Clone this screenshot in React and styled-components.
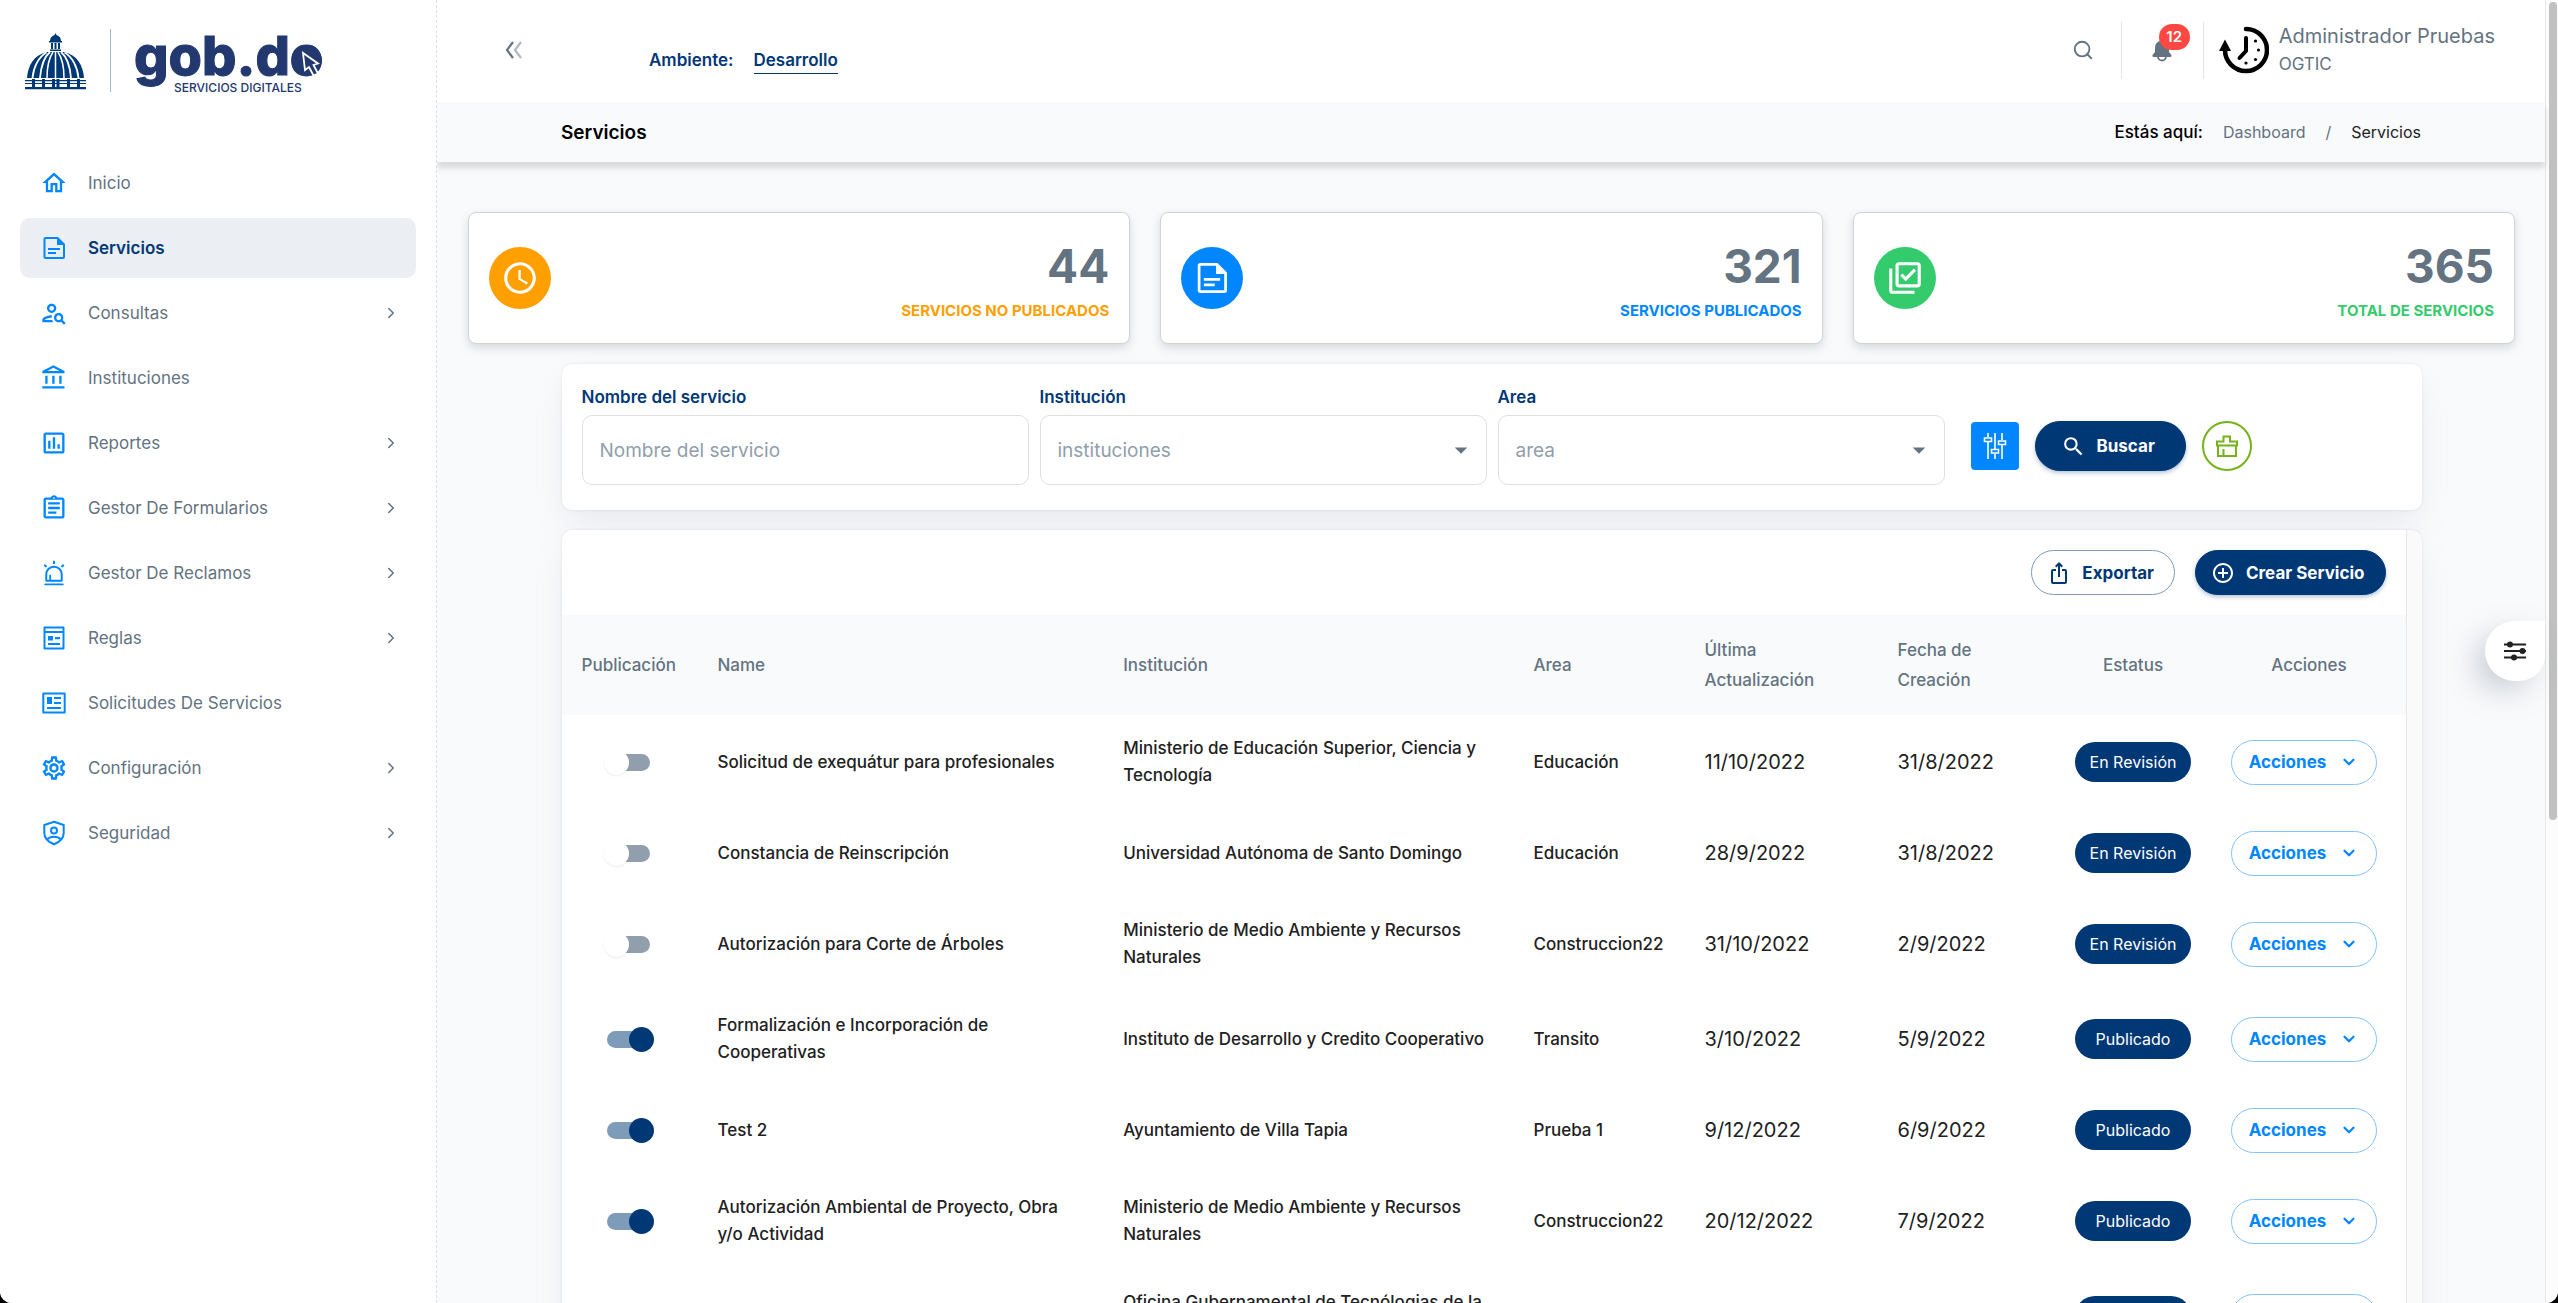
import React, { useState } from "react";
import styled, { createGlobalStyle } from "styled-components";
import {
  MdOutlineHome,
  MdOutlinePersonSearch,
  MdOutlineAccountBalance,
  MdOutlineInsertChart,
  MdOutlineAssignment,
  MdOutlineSettings,
  MdOutlineLibraryAddCheck,
  MdAccessTime,
  MdSearch,
  MdIosShare,
  MdAddCircleOutline,
  MdArrowDropDown,
} from "react-icons/md";
import { AiOutlineAlert } from "react-icons/ai";
import { FiSearch, FiChevronRight, FiChevronDown } from "react-icons/fi";

const colors = {
  primary: "#003876",
  blue: "#0087ff",
  orange: "#ffa000",
  green: "#34cb6c",
  lime: "#76b219",
  grey: "#637381",
  page: "#f9fafc",
};

const GlobalStyle = createGlobalStyle`
  * {
    box-sizing: border-box;
  }
  body {
    margin: 0;
    background: #000;
    font-family: Inter, "Liberation Sans", sans-serif;
    font-size: 17px;
    color: #212121;
  }
  button, input, select {
    font-family: inherit;
  }
  button {
    cursor: pointer;
  }
`;

// --- Layout ---
const Shell = styled.div`
  display: grid;
  grid-template-columns: 437px minmax(0, 1fr) 13px;
  height: 100vh;
  overflow: hidden;
  background: ${colors.page};
  border-radius: 0 0 12px 12px;
`;
const Sidebar = styled.aside`
  position: relative;
  z-index: 2;
  background: #fff;
  border-right: 1px dashed #dde1e6;
  padding: 29px 20px 20px;
`;
const LogoLink = styled.a`
  display: block;
  height: 64px;
  margin: 0 0 60px 5px;
`;
const Nav = styled.nav`
  display: flex;
  flex-direction: column;
  gap: 5px;
`;
const NavItem = styled.a`
  display: flex;
  align-items: center;
  height: 60px;
  padding: 0 16px 0 20px;
  border-radius: 10px;
  text-decoration: none;
  font-size: 17px;
  font-weight: ${(props) => (props.$active ? 600 : 400)};
  color: ${(props) => (props.$active ? colors.primary : colors.grey)};
  background: ${(props) => (props.$active ? "#ebeef3" : "transparent")};

  .nav-icon {
    width: 28px;
    height: 28px;
    margin-right: 20px;
    color: ${colors.blue};
  }
  .nav-arrow {
    margin-left: auto;
  }
`;
const Content = styled.div`
  position: relative;
  display: flex;
  flex-direction: column;
  min-width: 0;
  height: 100vh;
`;
const ScrollRail = styled.div`
  background: #fcfcfc;
  border-left: 1px solid #e8e8e8;
  padding: 2px 1px 2px 3px;
`;
const ScrollThumb = styled.div`
  height: 63%;
  border-radius: 4px;
  background: #c1c1c1;
`;

// --- Header ---
const Header = styled.header`
  display: flex;
  align-items: center;
  height: 102px;
  padding: 0 50px 2px 67px;
  background: #fff;
  flex-shrink: 0;
`;
const IconButton = styled.button`
  display: flex;
  align-items: center;
  justify-content: center;
  padding: 0;
  border: none;
  background: none;
  color: ${colors.grey};
`;
const Environment = styled.div`
  display: flex;
  gap: 20px;
  margin-left: 125px;
  padding-top: 20px;
  font-weight: 600;
  font-size: 17px;
  line-height: 26px;
  color: ${colors.primary};

  a {
    color: inherit;
    text-decoration: none;
    border-bottom: 1px solid ${colors.primary};
  }
`;
const HeaderRight = styled.div`
  display: flex;
  align-items: center;
  margin-left: auto;
`;
const Notifications = styled.div`
  margin: 0 15px 0 27px;
  border: solid #e3e6e9;
  border-width: 0 1px;
  padding: 3px 0 4px;
`;
const BellButton = styled(IconButton)`
  position: relative;
  width: 81px;
  height: 50px;
`;
const BellCount = styled.span`
  position: absolute;
  top: -1px;
  left: 37px;
  min-width: 31px;
  border-radius: 13px;
  background: #ff4842;
  color: #fff;
  font-size: 15px;
  font-weight: 600;
  line-height: 26px;
`;
const UserText = styled.div`
  margin-left: 10px;
  color: ${colors.grey};
`;
const UserName = styled.div`
  font-size: 20px;
  line-height: 28px;
`;
const UserOrg = styled.div`
  font-size: 17px;
  line-height: 28px;
`;
const SubHeader = styled.div`
  height: 60px;
  flex-shrink: 0;
  background: ${colors.page};
  box-shadow: 0 6px 6px rgba(0, 0, 0, 0.13);
  z-index: 1;
`;
const Container = styled.div`
  width: 100%;
  max-width: 1860px;
  margin: 0 auto;
`;
const SubHeaderInner = styled(Container)`
  display: flex;
  align-items: center;
  justify-content: space-between;
  height: 100%;
`;
const PageTitle = styled.h1`
  margin: 0;
  font-size: 19px;
  font-weight: 600;
  color: #000;
`;
const Breadcrumb = styled.nav`
  display: flex;
  align-items: center;
  gap: 20px;
  font-size: 16px;

  strong {
    font-size: 17px;
    font-weight: 500;
    color: #000;
  }
  a, i {
    color: ${colors.grey};
    text-decoration: none;
    font-style: normal;
  }
`;

// --- Stat cards ---
const Main = styled.main`
  flex: 1;
  min-height: 0;
  padding: 50px 30px 0 31px;
  overflow-y: auto;
  scrollbar-width: none;
`;
const Stats = styled.section`
  display: grid;
  grid-template-columns: repeat(3, 1fr);
  gap: 30px;
  margin-bottom: 20px;
`;
const StatCard = styled.article`
  display: flex;
  align-items: center;
  justify-content: space-between;
  height: 132px;
  padding: 0 20px;
  background: #fff;
  border: 1px solid #d0d4d9;
  border-radius: 8px;
  box-shadow: 0 4px 10px rgba(99, 115, 129, 0.24);
`;
const StatIcon = styled.div`
  display: flex;
  align-items: center;
  justify-content: center;
  width: 62px;
  height: 62px;
  border-radius: 50%;
  background: ${(props) => props.$color};
  color: #fff;

  svg {
    width: 38px;
    height: 38px;
  }
`;
const StatText = styled.div`
  text-align: right;
`;
const StatNumber = styled.div`
  font-size: 46px;
  font-weight: 700;
  line-height: 65px;
  color: ${colors.grey};
`;
const StatLabel = styled.div`
  font-size: 15px;
  font-weight: 700;
  line-height: 23px;
  text-transform: uppercase;
  color: ${(props) => props.$color};
`;

// --- Filters ---
const Panel = styled(Container)`
  background: #fff;
  border-radius: 10px;
  box-shadow: 0 0 3px rgba(145, 158, 171, 0.24), 0 16px 32px -4px rgba(145, 158, 171, 0.16);
`;
const Filters = styled(Panel).attrs({ as: "form" })`
  display: grid;
  grid-template-columns: repeat(3, minmax(0, 1fr)) 446px;
  gap: 11px;
  margin-bottom: 20px;
  padding: 20px 20px 25px;
`;
const Field = styled.div`
  display: flex;
  flex-direction: column;
  gap: 5px;

  label {
    font-size: 17px;
    font-weight: 600;
    line-height: 26px;
    color: ${colors.primary};
  }
`;
const Control = styled.input`
  width: 100%;
  height: 70px;
  padding: 0 17px;
  border: 1px solid #dce0e4;
  border-radius: 10px;
  background: #fff;
  font-size: 19px;
  color: #919eab;
  appearance: none;
  outline: none;

  &::placeholder {
    color: #919eab;
    opacity: 1;
  }
`;
const SelectWrapper = styled.div`
  position: relative;

  svg {
    position: absolute;
    right: 11px;
    top: 20px;
    color: ${colors.grey};
    pointer-events: none;
  }
`;
const FilterActions = styled.div`
  display: flex;
  align-items: center;
  gap: 16px;
  padding: 23px 0 0 15px;
`;
const SquareButton = styled.button`
  display: flex;
  align-items: center;
  justify-content: center;
  width: 48px;
  height: 48px;
  padding: 0;
  border: none;
  border-radius: 4px;
  background: ${colors.blue};
  color: #fff;
`;
const PillButton = styled.button`
  display: inline-flex;
  align-items: center;
  justify-content: center;
  gap: 11px;
  height: ${(props) => (props.$large ? 50 : 45)}px;
  padding: 0 ${(props) => (props.$large ? 30 : 20)}px 0 ${(props) => (props.$large ? 25 : 15)}px;
  border: 1px solid ${(props) => (props.$outlined ? "#7f9bba" : colors.primary)};
  border-radius: 25px;
  background: ${(props) => (props.$outlined ? "#fff" : colors.primary)};
  color: ${(props) => (props.$outlined ? colors.primary : "#fff")};
  font-size: 17px;
  font-weight: 700;
  white-space: nowrap;
  box-shadow: ${(props) => (props.$outlined ? "none" : "0 2px 4px rgba(0, 56, 118, 0.3)")};
`;
const ClearButton = styled.button`
  display: flex;
  align-items: center;
  justify-content: center;
  width: 50px;
  height: 50px;
  padding: 0;
  border: 2px solid ${colors.lime};
  border-radius: 50%;
  background: #fff;
  color: ${colors.lime};
`;

// --- Table ---
const TablePanel = styled(Panel)`
  padding-right: 15px;
  overflow: hidden;
  background: #fafafa;
`;
const TableInner = styled.div`
  background: #fff;
  border-right: 1px solid #e6e8ea;
`;
const Toolbar = styled.div`
  display: flex;
  justify-content: flex-end;
  gap: 20px;
  padding: 20px;
`;
const Table = styled.table`
  width: 100%;
  table-layout: fixed;
  border-collapse: collapse;
`;
const Th = styled.th`
  width: ${(props) => props.$width || "auto"};
  height: 100px;
  padding: 0 18px 0 20px;
  background: ${colors.page};
  color: ${colors.grey};
  font-size: 17px;
  font-weight: 500;
  line-height: 30px;
  text-align: ${(props) => props.$align || "left"};
`;
const Td = styled.td`
  height: 87px;
  padding: 20px 18px 21px 20px;
  font-size: ${(props) => (props.$date ? 20 : 17)}px;
  font-weight: ${(props) => (props.$date ? 400 : 500)};
  line-height: 27px;
  text-align: ${(props) => props.$align || "left"};
  white-space: ${(props) => (props.$date ? "nowrap" : "normal")};
`;
const Switch = styled.input`
  appearance: none;
  position: relative;
  display: block;
  width: 43px;
  height: 17px;
  margin: 0 0 0 25px;
  border-radius: 9px;
  background: #919eab;
  cursor: pointer;

  &::before {
    content: "";
    position: absolute;
    top: -4px;
    left: -3px;
    width: 25px;
    height: 25px;
    border-radius: 50%;
    background: #fff;
    box-shadow: 0 1px 2px rgba(145, 158, 171, 0.2);
  }
  &:checked {
    background: #7f9bba;
  }
  &:checked::before {
    left: 22px;
    background: ${colors.primary};
    box-shadow: none;
  }
`;
const Status = styled.span`
  display: inline-block;
  width: 116px;
  border-radius: 20px;
  background: ${colors.primary};
  color: #fff;
  font-size: 16px;
  font-weight: 400;
  line-height: 40px;
  text-align: center;
  vertical-align: middle;
`;
const ActionButton = styled.button`
  display: flex;
  align-items: center;
  justify-content: center;
  gap: 14px;
  width: 146px;
  height: 45px;
  padding: 0;
  border: 1px solid #80c3ff;
  border-radius: 23px;
  background: #fff;
  color: ${colors.blue};
  font-size: 17px;
  font-weight: 700;
`;
const SettingsTab = styled.button`
  position: absolute;
  top: 621px;
  right: 0;
  display: flex;
  align-items: center;
  justify-content: center;
  width: 60px;
  height: 60px;
  padding: 0;
  border: none;
  border-radius: 30px 0 26px 30px;
  background: #fff;
  box-shadow: -12px 12px 32px -4px rgba(99, 115, 129, 0.36);
  z-index: 2;
`;

// --- Drawings ---
const Logo = () => (
  <svg width="310" height="76" viewBox="0 0 310 76" role="img" aria-label="gob.do">
    <g fill={colors.primary}>
      <path d="M30.500 4l1 2c3 1 4.500 3 4.500 6h-11c0-3 1.500-5 4.500-6z" />
      <path d="M24 12h13v1.500H24zM26 14h2v6h-2zM29.500 14h2v6h-2zM33 14h2v6h-2zM25 20.500h11v1.500H25z" />
      <path d="M2 49C3 36 9 26 22 23h17c13 3 19 13 20 26z" />
      <path d="M0 51h61v1.200H0zM0 58h61v2.200H0z" />
      <path d="M7 50h3v8H7zM17 50h3v8h-3zM27 50h3v8h-3zM31.500 50h3v8h-3zM42 50h3v8h-3zM52 50h3v8h-3z" />
    </g>
    <path d="M0 54.500h61" stroke={colors.primary} strokeWidth="1" />
    <g fill="none" stroke="#fff" strokeWidth="1.800">
      <path d="M30.500 22v27M22 49c0-11 2-20 6-26M39 49c0-11-2-20-6-26" strokeWidth="1.500" />
      <path d="M15 49c1-12 4-21 10-26M46 49c-1-12-4-21-10-26" />
      <path d="M7.500 49c1-11 6-21 14-25.500M53.500 49c-1-11-6-21-14-25.500" />
    </g>
    <path d="M85.500 0v63" stroke="#a3b8d0" strokeWidth="1" />
    <g fill="#22386f" fontFamily="Inter, sans-serif">
      <text x="109" y="46" fontSize="54" fontWeight="800" stroke="#22386f" strokeWidth="1">gob.do</text>
      <text x="149" y="63" fontSize="12" fontWeight="500">SERVICIOS DIGITALES</text>
      <circle cx="283" cy="31.500" r="14" />
    </g>
    <path
      d="M278 24l2 17 4-3 4.500 8.500 4.500-2-4.500-8.500 4.500-1.500z"
      fill="#22386f"
      stroke="#fff"
      strokeWidth="1.800"
    />
  </svg>
);
const DocumentIcon = (props) => (
  <svg viewBox="0 0 28 28" fill="currentColor" {...props}>
    <path
      d="M5.500 3H18l7 7v13a2 2 0 0 1-2 2H5.500a2 2 0 0 1-2-2V5a2 2 0 0 1 2-2zM5.500 5v18H23V11h-6V5z"
      fillRule="evenodd"
    />
    <path d="M8 14h12v2H8zM8 18h8v2H8z" />
  </svg>
);
const RulesIcon = (props) => (
  <svg viewBox="0 0 28 28" fill="currentColor" {...props}>
    <path d="M4.500 2.500h19a1 1 0 0 1 1 1v21a1 1 0 0 1-1 1h-19a1 1 0 0 1-1-1v-21a1 1 0 0 1 1-1zM5.500 4.500v2.500h17V4.500zM5.500 9v14.500h17V9z" fillRule="evenodd" />
    <path d="M8 12h5v4.500H8zM15 13h5v2.200h-5zM8 19h12v2H8z" />
  </svg>
);
const RequestsIcon = (props) => (
  <svg viewBox="0 0 28 28" fill="currentColor" {...props}>
    <path d="M3.500 3.500h21a1.200 1.200 0 0 1 1.200 1.200v18.600a1.200 1.200 0 0 1-1.200 1.200h-21a1.200 1.200 0 0 1-1.200-1.200V4.700a1.200 1.200 0 0 1 1.200-1.200zM4.300 5.500v17h19.400v-17z" fillRule="evenodd" />
    <path d="M7 8h5v7H7zM14 8h7v2h-7zM14 13h7v2h-7zM7 18h14v2H7z" />
  </svg>
);
const ShieldIcon = (props) => (
  <svg viewBox="0 0 28 28" fill="none" stroke="currentColor" strokeWidth="2" {...props}>
    <path d="M14 2.800l9.700 3.200v8c0 5-4 9-9.700 11.300C8.300 23 4.300 19 4.300 14V6z" />
    <circle cx="14" cy="11.500" r="3" />
    <path d="M7 20.500c3.500-3.600 10.500-3.600 14 0" />
  </svg>
);
const CollapseIcon = () => (
  <svg width="20" height="18" viewBox="0 0 20 18" fill="none" stroke="currentColor" strokeWidth="2.200">
    <path d="M9 1L3 9l6 8" />
    <path d="M17 1l-6 8 6 8" opacity="0.500" />
  </svg>
);
const BellIcon = () => (
  <svg width="20" height="24" viewBox="0 0 20 24" fill="currentColor">
    <path d="M10 1a1.800 1.800 0 0 0-1.800 1.800C5 3.600 3 6.300 3 9.700V14L0.600 17c-.6.900 0 2 1 2h16.800c1 0 1.600-1.100 1-2L17 14V9.700c0-3.400-2-6.100-5.200-6.900A1.800 1.800 0 0 0 10 1z" />
    <path d="M6 18.500a4 4 0 0 0 8 0" fill="none" stroke="currentColor" strokeWidth="1.800" />
  </svg>
);
const ClockAvatar = () => (
  <svg width="50" height="50" viewBox="0 0 50 50" fill="none" stroke="#000">
    <path d="M27 4a21 21 0 1 1-21 21v-3" strokeWidth="4.500" strokeLinecap="round" />
    <path d="M6 14.500L0 26h12z" fill="#000" stroke="none" />
    <path d="M27 13v13l-6.500 7" strokeWidth="4" strokeLinecap="round" strokeLinejoin="round" />
    <g fill="#000" stroke="none">
      <circle cx="36.500" cy="16" r="1.600" />
      <circle cx="39.500" cy="25" r="1.600" />
      <circle cx="36.500" cy="34.500" r="1.600" />
      <circle cx="27" cy="38" r="1.600" />
    </g>
  </svg>
);
const SlidersIcon = () => (
  <svg width="24" height="28" viewBox="0 0 24 28" fill="none" stroke="currentColor" strokeWidth="1.600">
    <path d="M5 1v4M5 10v17M12 1v16M12 22v5M19 1v7M19 13v14" />
    <path d="M1.500 6h7v3.500h-7zM8.500 17.500h7V21h-7zM15.500 9h7v3.500h-7z" />
  </svg>
);
const BrushIcon = () => (
  <svg width="24" height="24" viewBox="0 0 24 24" fill="none" stroke="currentColor" strokeWidth="2">
    <path d="M2 11.500V7.500h6.500V2.500h6.500v5H22v4z" />
    <path d="M3 11.500v10.500h18V11.500M8.500 15v6.500" />
  </svg>
);
const TuneIcon = () => (
  <svg width="22" height="20" viewBox="0 0 22 20" fill="#212121">
    <path d="M0 2.500h22v2H0zM0 9h22v2H0zM0 15.500h22v2H0z" />
    <circle cx="6" cy="3.500" r="3" />
    <circle cx="18.500" cy="10" r="3" />
    <circle cx="10" cy="16.500" r="3" />
  </svg>
);

// --- Data ---
const navItems = [
  { label: "Inicio", icon: MdOutlineHome },
  { label: "Servicios", icon: DocumentIcon, active: true },
  { label: "Consultas", icon: MdOutlinePersonSearch, arrow: true },
  { label: "Instituciones", icon: MdOutlineAccountBalance },
  { label: "Reportes", icon: MdOutlineInsertChart, arrow: true },
  { label: "Gestor De Formularios", icon: MdOutlineAssignment, arrow: true },
  { label: "Gestor De Reclamos", icon: AiOutlineAlert, arrow: true },
  { label: "Reglas", icon: RulesIcon, arrow: true },
  { label: "Solicitudes De Servicios", icon: RequestsIcon },
  { label: "Configuración", icon: MdOutlineSettings, arrow: true },
  { label: "Seguridad", icon: ShieldIcon, arrow: true },
];
const stats = [
  { value: 44, label: "Servicios no publicados", color: colors.orange, icon: MdAccessTime },
  { value: 321, label: "Servicios publicados", color: colors.blue, icon: DocumentIcon },
  { value: 365, label: "Total de servicios", color: colors.green, icon: MdOutlineLibraryAddCheck },
];
const columns = [
  { label: "Publicación", width: "136px" },
  { label: "Name", width: "22%" },
  { label: "Institución" },
  { label: "Area", width: "171px" },
  { label: "Última Actualización", width: "193px" },
  { label: "Fecha de Creación", width: "176px" },
  { label: "Estatus", width: "157px", align: "center" },
  { label: "Acciones", width: "195px", align: "center" },
];
const initialServices = [
  { name: "Solicitud de exequátur para profesionales", institution: "Ministerio de Educación Superior, Ciencia y Tecnología", area: "Educación", updated: "11/10/2022", created: "31/8/2022", published: false },
  { name: "Constancia de Reinscripción", institution: "Universidad Autónoma de Santo Domingo", area: "Educación", updated: "28/9/2022", created: "31/8/2022", published: false },
  { name: "Autorización para Corte de Árboles", institution: "Ministerio de Medio Ambiente y Recursos Naturales", area: "Construccion22", updated: "31/10/2022", created: "2/9/2022", published: false },
  { name: "Formalización e Incorporación de Cooperativas", institution: "Instituto de Desarrollo y Credito Cooperativo", area: "Transito", updated: "3/10/2022", created: "5/9/2022", published: true },
  { name: "Test 2", institution: "Ayuntamiento de Villa Tapia", area: "Prueba 1", updated: "9/12/2022", created: "6/9/2022", published: true },
  { name: "Autorización Ambiental de Proyecto, Obra y/o Actividad", institution: "Ministerio de Medio Ambiente y Recursos Naturales", area: "Construccion22", updated: "20/12/2022", created: "7/9/2022", published: true },
  { name: "Test 3", institution: "Oficina Gubernamental de Tecnólogias de la Información", area: "Prueba 1", updated: "9/12/2022", created: "7/9/2022", published: true },
];

const App = () => {
  const [services, setServices] = useState(initialServices);

  const toggle = (index) =>
    setServices(services.map((s, i) => (i === index ? { ...s, published: !s.published } : s)));

  return (
    <>
      <GlobalStyle />
      <Shell>
        <Sidebar>
          <LogoLink href="#inicio">
            <Logo />
          </LogoLink>
          <Nav>
            {navItems.map(({ label, icon: Icon, active, arrow }) => (
              <NavItem key={label} href="#" $active={active}>
                <Icon className="nav-icon" />
                {label}
                {arrow && <FiChevronRight className="nav-arrow" size={18} />}
              </NavItem>
            ))}
          </Nav>
        </Sidebar>

        <Content>
          <Header>
            <IconButton aria-label="Contraer menú">
              <CollapseIcon />
            </IconButton>
            <Environment>
              <span>Ambiente:</span>
              <a href="#ambiente">Desarrollo</a>
            </Environment>
            <HeaderRight>
              <IconButton aria-label="Buscar">
                <FiSearch size={22} />
              </IconButton>
              <Notifications>
                <BellButton aria-label="Notificaciones">
                  <BellIcon />
                  <BellCount>12</BellCount>
                </BellButton>
              </Notifications>
              <ClockAvatar />
              <UserText>
                <UserName>Administrador Pruebas</UserName>
                <UserOrg>OGTIC</UserOrg>
              </UserText>
            </HeaderRight>
          </Header>
          <SubHeader>
            <SubHeaderInner>
              <PageTitle>Servicios</PageTitle>
              <Breadcrumb>
                <strong>Estás aquí:</strong>
                <a href="#dashboard">Dashboard</a>
                <i>/</i>
                <span>Servicios</span>
              </Breadcrumb>
            </SubHeaderInner>
          </SubHeader>

          <Main>
            <Stats>
              {stats.map(({ value, label, color, icon: Icon }) => (
                <StatCard key={label}>
                  <StatIcon $color={color}>
                    <Icon />
                  </StatIcon>
                  <StatText>
                    <StatNumber>{value}</StatNumber>
                    <StatLabel $color={color}>{label}</StatLabel>
                  </StatText>
                </StatCard>
              ))}
            </Stats>

            <Filters>
              <Field>
                <label htmlFor="name">Nombre del servicio</label>
                <Control id="name" placeholder="Nombre del servicio" />
              </Field>
              <Field>
                <label htmlFor="institution">Institución</label>
                <SelectWrapper>
                  <Control as="select" id="institution">
                    <option>instituciones</option>
                  </Control>
                  <MdArrowDropDown size={30} />
                </SelectWrapper>
              </Field>
              <Field>
                <label htmlFor="area">Area</label>
                <SelectWrapper>
                  <Control as="select" id="area">
                    <option>area</option>
                  </Control>
                  <MdArrowDropDown size={30} />
                </SelectWrapper>
              </Field>
              <FilterActions>
                <SquareButton type="button" aria-label="Filtros">
                  <SlidersIcon />
                </SquareButton>
                <PillButton type="button" $large>
                  <MdSearch size={25} />
                  Buscar
                </PillButton>
                <ClearButton type="button" aria-label="Limpiar">
                  <BrushIcon />
                </ClearButton>
              </FilterActions>
            </Filters>

            <TablePanel>
              <TableInner>
                <Toolbar>
                  <PillButton $outlined>
                    <MdIosShare size={24} />
                    Exportar
                  </PillButton>
                  <PillButton>
                    <MdAddCircleOutline size={24} />
                    Crear Servicio
                  </PillButton>
                </Toolbar>
                <Table>
                  <thead>
                    <tr>
                      {columns.map((column) => (
                        <Th key={column.label} $width={column.width} $align={column.align}>
                          {column.label}
                        </Th>
                      ))}
                    </tr>
                  </thead>
                  <tbody>
                    {services.map((service, index) => (
                      <tr key={index}>
                        <Td>
                          <Switch
                            type="checkbox"
                            aria-label={`Publicar ${service.name}`}
                            checked={service.published}
                            onChange={() => toggle(index)}
                          />
                        </Td>
                        <Td>{service.name}</Td>
                        <Td>{service.institution}</Td>
                        <Td>{service.area}</Td>
                        <Td $date>{service.updated}</Td>
                        <Td $date>{service.created}</Td>
                        <Td $align="center">
                          <Status>{service.published ? "Publicado" : "En Revisión"}</Status>
                        </Td>
                        <Td>
                          <ActionButton>
                            Acciones
                            <FiChevronDown size={18} strokeWidth={3} />
                          </ActionButton>
                        </Td>
                      </tr>
                    ))}
                  </tbody>
                </Table>
              </TableInner>
            </TablePanel>
          </Main>
          <SettingsTab aria-label="Ajustes">
            <TuneIcon />
          </SettingsTab>
        </Content>

        <ScrollRail>
          <ScrollThumb />
        </ScrollRail>
      </Shell>
    </>
  );
};

export default App;
